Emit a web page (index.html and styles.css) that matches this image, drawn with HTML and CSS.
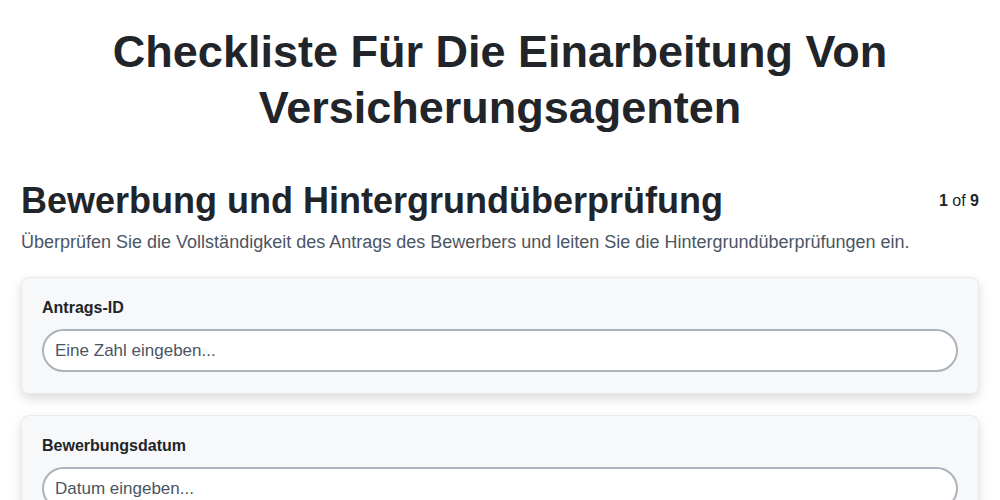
FILE: index.html
```html
<!DOCTYPE html>
<html lang="de">
<head>
<meta charset="utf-8">
<link rel="stylesheet" href="styles.css">
</head>
<body>
<div class="page">
  <h1 class="title">Checkliste Für Die Einarbeitung Von Versicherungsagenten</h1>
  <div class="section-head">
    <h2 class="section-title">Bewerbung und Hintergrundüberprüfung</h2>
    <div class="pager"><b>1</b> of <b>9</b></div>
  </div>
  <p class="section-desc">Überprüfen Sie die Vollständigkeit des Antrags des Bewerbers und leiten Sie die Hintergrundüberprüfungen ein.</p>
  <div class="card">
    <label class="field-label">Antrags-ID</label>
    <input class="field-input" type="text" placeholder="Eine Zahl eingeben...">
  </div>
  <div class="card">
    <label class="field-label">Bewerbungsdatum</label>
    <input class="field-input" type="text" placeholder="Datum eingeben...">
  </div>
</div>
</body>
</html>
```

FILE: styles.css
```css
html, body {
  margin: 0;
  padding: 0;
  background: #ffffff;
}
body {
  font-family: "Liberation Sans", Arial, sans-serif;
  color: #212529;
}
.page {
  padding: 24px 21px 0 21px;
}
.title {
  margin: 0 auto;
  max-width: 860px;
  text-align: center;
  font-size: 45px;
  line-height: 56px;
  font-weight: 700;
  color: #212529;
}
.section-head {
  margin-top: 43px;
  display: flex;
  align-items: center;
  justify-content: space-between;
}
.section-title {
  margin: 0;
  font-size: 36px;
  line-height: 43px;
  font-weight: 700;
  color: #212529;
}
.pager {
  font-size: 16px;
  color: #212529;
}
.section-desc {
  margin: 7px 0 21px 0;
  font-size: 18px;
  line-height: 27px;
  color: #4b5563;
}
.card {
  background: #f7f8fa;
  border: 1px solid #e8eaee;
  border-radius: 8px;
  box-shadow: 0 5px 12px rgba(0, 0, 0, 0.14);
  padding: 19px 20px 21px 20px;
  margin-bottom: 21px;
  display: flex;
  flex-direction: column;
}
.field-label {
  font-size: 16px;
  line-height: 22px;
  font-weight: 700;
  color: #212529;
  margin-bottom: 10px;
}
.field-input {
  box-sizing: border-box;
  height: 43px;
  width: 100%;
  border: 2px solid #adb3ba;
  border-radius: 22px;
  background: #ffffff;
  padding: 0 11px;
  font-family: "Liberation Sans", Arial, sans-serif;
  font-size: 17px;
  color: #212529;
  outline: none;
}
.field-input::placeholder {
  color: #4b5563;
  opacity: 1;
}
```
